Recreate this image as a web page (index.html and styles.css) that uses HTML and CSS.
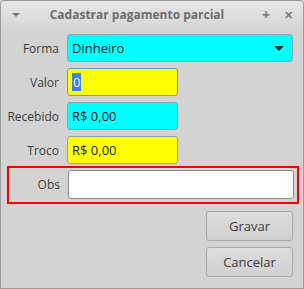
FILE: index.html
```html
<!DOCTYPE html>
<html lang="pt-BR">
<head>
  <meta charset="UTF-8">
  <title>Cadastrar pagamento parcial</title>
  <link rel="stylesheet" href="styles.css">
</head>
<body>
  <div class="window">
    <div class="titlebar">
      <span class="menu-arrow"></span>
      <span class="title">Cadastrar pagamento parcial</span>
      <span class="tb-btn">+</span>
      <span class="tb-btn close">&#x2715;</span>
    </div>

    <div class="form">
      <label class="lbl">Forma</label>
      <div class="field combo cyan">
        <span>Dinheiro</span>
        <span class="arrow"></span>
      </div>

      <label class="lbl">Valor</label>
      <div class="field short yellow focused"><span class="sel">0</span></div>

      <label class="lbl">Recebido</label>
      <div class="field short cyan">R$ 0,00</div>

      <label class="lbl">Troco</label>
      <div class="field short yellow">R$ 0,00</div>
    </div>

    <div class="obs-box">
      <label class="lbl">Obs</label>
      <div class="field white"></div>
    </div>

    <div class="buttons">
      <button>Gravar</button>
      <button>Cancelar</button>
    </div>
  </div>
</body>
</html>
```

FILE: styles.css
```css
body {
  margin: 0;
  font-family: "Open Sans", "Noto Sans", sans-serif;
  font-size: 13px;
  color: #3c3c3c;
  background: #d3d3d3;
}

.window {
  width: 302px;
  height: 287px;
  border: 1px solid #9a9a9a;
  border-radius: 4px 4px 0 0;
  background: #d3d3d3;
}

.titlebar {
  height: 27px;
  display: flex;
  align-items: center;
  padding: 0 10px 0 11px;
  background: linear-gradient(#e6e6e6, #d6d6d6);
  border-radius: 4px 4px 0 0;
}

.menu-arrow {
  width: 0;
  height: 0;
  border-left: 4px solid transparent;
  border-right: 4px solid transparent;
  border-top: 4px solid #7a7a7a;
  margin-top: 1px;
}

.title {
  flex: 1;
  text-align: center;
  font-size: 12px;
  font-weight: bold;
  color: #6e6e6e;
  margin-left: 4px;
}

.tb-btn {
  color: #7a7a7a;
  font-weight: bold;
  font-size: 14px;
  margin-left: 12px;
}

.tb-btn.close {
  font-size: 11px;
  margin-left: 14px;
}

.form {
  display: grid;
  grid-template-columns: 58px 226px;
  column-gap: 8px;
  row-gap: 6px;
  padding: 6px 0 0 0;
}

.lbl {
  font-size: 12px;
  text-align: right;
  align-self: center;
}

.field {
  box-sizing: border-box;
  height: 28px;
  border: 1px solid #8ea2b0;
  border-radius: 3px;
  padding: 0 4px;
  display: flex;
  align-items: center;
  color: #1e1e1e;
}

.field.short {
  width: 111px;
}

.field.cyan { background: #00ffff; }
.field.yellow { background: #ffff00; }
.field.white { background: #ffffff; border-color: #8c8c8c; }
.field.focused { border-color: #5a9ad8; }

.combo {
  justify-content: space-between;
  padding-right: 8px;
}

.arrow {
  width: 0;
  height: 0;
  border-left: 5px solid transparent;
  border-right: 5px solid transparent;
  border-top: 5px solid #333;
}

.sel {
  background: #3d82d6;
  color: #e8f0ff;
  padding: 0 1px;
  line-height: 18px;
}

.obs-box {
  display: grid;
  grid-template-columns: 51px 226px;
  column-gap: 8px;
  margin: 2px 4px 0 6px;
  padding: 2px 4px 3px 0;
  border: 2px solid #ff0000;
  height: 38px;
  box-sizing: border-box;
  align-items: center;
}

.obs-box .field {
  height: 29px;
}

.buttons {
  display: flex;
  flex-direction: column;
  align-items: flex-end;
  gap: 6px;
  padding: 7px 10px 0 0;
}

button {
  width: 87px;
  height: 30px;
  font-family: "Open Sans", "Noto Sans", sans-serif;
  font-size: 13px;
  color: #3c3c3c;
  background: linear-gradient(#dcdcdc, #d0d0d0);
  border: 1px solid #a8a8a8;
  border-radius: 3px;
}
```
